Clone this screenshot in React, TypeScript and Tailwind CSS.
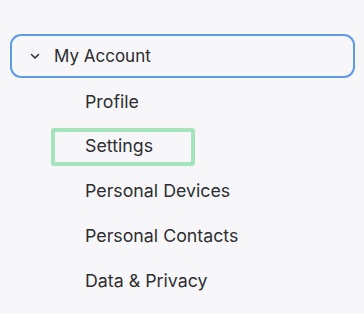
import React from 'react';

const items = ['Profile', 'Settings', 'Personal Devices', 'Personal Contacts', 'Data & Privacy'];

export default function App() {
    return (
        <div className="min-h-screen bg-[#f7f7f9] pt-[34px] font-['Inter',sans-serif] text-[#2a2a2e]">
            {/* section header */}
            <div className="ml-[10px] w-[345px] h-[44px] border-2 border-[#5e9be6] rounded-[11px] flex items-center pl-[16px]">
                <svg width="10" height="7" viewBox="0 0 10 7" className="ml-[2px]">
                    <path d="M1.5 1.5 L5 5 L8.5 1.5" fill="none" stroke="#333" strokeWidth="1.6" strokeLinecap="round" strokeLinejoin="round" />
                </svg>
                <span className="ml-[14px] text-[17px] leading-none">My Account</span>
            </div>

            {/* sub items */}
            <ul className="pt-[1.5px]">
                {items.map((label) => (
                    <li key={label} className="h-[44.8px] flex items-center text-[17.8px] text-[#2e2e32]">
                        {label === 'Settings' ? (
                            <div className="ml-[51px] w-[144px] h-[38px] border-4 border-[#a5e3bd] rounded-[3px] flex items-center pl-[30px]">
                                {label}
                            </div>
                        ) : (
                            <span className="ml-[85px]">{label}</span>
                        )}
                    </li>
                ))}
            </ul>
        </div>
    );
}
